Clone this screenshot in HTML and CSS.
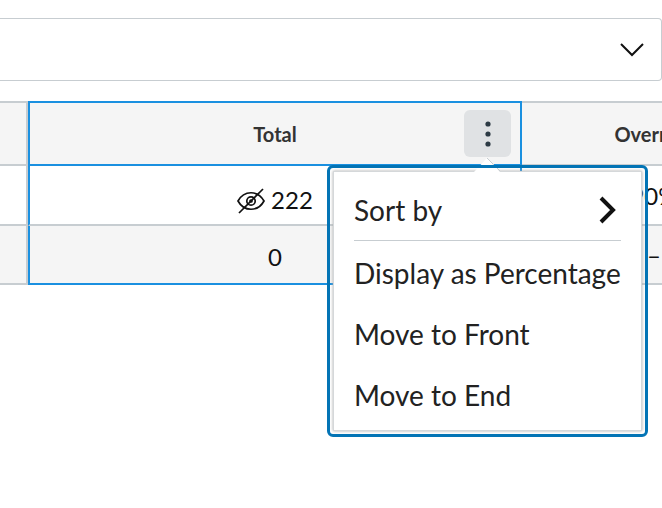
FILE: index.html
```
<!DOCTYPE html>
<html lang="en">
<head>
<meta charset="UTF-8">
<title>Gradebook</title>
<link rel="stylesheet" href="styles.css">
</head>
<body>
	<button class="filter" aria-label="Expand">
		<svg class="chevron" viewBox="0 0 24 14"><path d="M1 1L12 12L23 1"/></svg>
	</button>
	<div class="grid">
		<table>
			<colgroup>
				<col class="col-edge">
				<col class="col-total">
				<col class="col-override">
			</colgroup>
			<thead>
				<tr>
					<th></th>
					<th class="active">
						<div class="head">
							<span>Total</span>
							<button class="options" aria-label="Total Options">
								<svg viewBox="0 0 6 26"><circle cx="3" cy="3" r="2.6"/><circle cx="3" cy="13" r="2.6"/><circle cx="3" cy="23" r="2.6"/></svg>
							</button>
						</div>
						<div class="menu">
							<svg class="arrow" viewBox="0 0 30 16"><path class="fill" d="M2 16L15 2L28 16Z"/><path class="edge" d="M15 2L28 15"/></svg>
							<div class="menu-list">
								<button class="item sort">Sort by
									<svg viewBox="0 0 18 28"><path d="M2 2L14 14L2 26"/></svg>
								</button>
								<hr>
								<button class="item">Display as Percentage</button>
								<button class="item">Move to Front</button>
								<button class="item">Move to End</button>
							</div>
						</div>
					</th>
					<th>Override</th>
				</tr>
			</thead>
			<tbody>
				<tr>
					<td></td>
					<td class="active">
						<div class="score">
							<svg class="eye" viewBox="0 0 28 26"><path d="M1 13C7 2 21 2 27 13C21 24 7 24 1 13Z"/><circle cx="14" cy="13" r="4.2"/><circle cx="14" cy="13" r="1"/><path d="M2 25L26 1"/></svg>
							<span>222</span>
						</div>
					</td>
					<td>90%</td>
				</tr>
				<tr class="even">
					<td></td>
					<td class="active last">0</td>
					<td>–</td>
				</tr>
			</tbody>
		</table>
	</div>
</body>
</html>
```

FILE: styles.css
```
* {
	box-sizing: border-box;
}

body {
	margin: 0;
	padding-top: 18px;
	font-family: Lato, sans-serif;
	color: #111;
	background-color: white;
}

button {
	font-family: inherit;
	color: inherit;
	border: none;
	background: none;
	padding: 0;
}

svg {
	fill: none;
	stroke: #111;
}

.filter {
	display: flex;
	align-items: center;
	justify-content: flex-end;
	width: 100%;
	height: 63px;
	padding-right: 17px;
	border: 1px solid #c7cdd1;
	border-left: none;
	border-radius: 0 4px 4px 0;
}

.chevron {
	width: 24px;
	height: 14px;
	stroke-width: 2;
}

.grid {
	min-height: 400px;
	margin-top: 20px;
	overflow: hidden;
}

table {
	width: 788px;
	table-layout: fixed;
	border-collapse: separate;
	border-spacing: 0;
}

.col-edge {
	width: 28px;
}

.col-total {
	width: 494px;
}

th {
	position: relative;
	height: 65px;
	padding: 0;
	font-size: 20px;
	font-weight: bold;
	color: #333;
	border: 2px solid #c7cdd1;
	border-left: none;
	background-color: #f5f5f5;
}

th.active {
	border: 2px solid #1a90e0;
}

td {
	height: 60px;
	padding: 0;
	font-size: 24px;
	text-align: center;
	border-right: 2px solid #c7cdd1;
	border-bottom: 2px solid #c7cdd1;
}

td.active {
	padding-top: 4px;
	border-left: 2px solid #1a90e0;
	border-right-color: #1a90e0;
}

td.last {
	border-bottom-color: #1a90e0;
}

.even {
	background-color: #f5f5f5;
}

.even td {
	height: 59px;
}

.head {
	display: grid;
	grid-template-columns: 1fr auto 1fr;
	align-items: center;
	padding: 0 9px;
}

.head span {
	grid-column: 2;
}

.options {
	justify-self: end;
	width: 47px;
	height: 47px;
	border-radius: 6px;
	background-color: #e0e2e4;
}

.options svg {
	display: block;
	width: 6px;
	height: 26px;
	margin: auto;
	fill: #2d3b45;
	stroke: none;
}

.score {
	display: flex;
	align-items: center;
	justify-content: center;
	gap: 6px;
	padding-top: 4px;
}

.eye {
	width: 28px;
	height: 26px;
	margin-top: 4px;
	stroke-width: 1.7;
}

/* drops below the header, past the right edge of its column */
.menu {
	position: absolute;
	z-index: 1;
	top: 62px;
	left: 297px;
	width: 321px;
	padding: 6px;
}

/* focus ring, drawn over the arrow */
.menu::after {
	content: "";
	position: absolute;
	inset: 0;
	border: 3px solid #0374b5;
	border-radius: 6px;
	pointer-events: none;
}

.menu-list {
	padding: 7px 20px 5px;
	border: 1px solid #d5d8da;
	box-shadow: 0 0 3px #aaa;
	background-color: white;
}

.arrow {
	position: absolute;
	top: -9px;
	left: 145px;
	width: 30px;
	height: 16px;
	stroke: none;
}

.arrow .fill {
	fill: white;
}

.arrow .edge {
	stroke: #c7cdd1;
}

.item {
	display: block;
	width: 100%;
	height: 61px;
	font-size: 28px;
	text-align: left;
	white-space: nowrap;
	color: #222;
}

.sort {
	display: flex;
	align-items: center;
	justify-content: space-between;
}

.sort svg {
	width: 18px;
	height: 28px;
	margin-right: 4px;
	stroke-width: 4;
}

hr {
	margin: 0 0 1px;
	border: none;
	border-top: 1px solid #c7cdd1;
}
```
